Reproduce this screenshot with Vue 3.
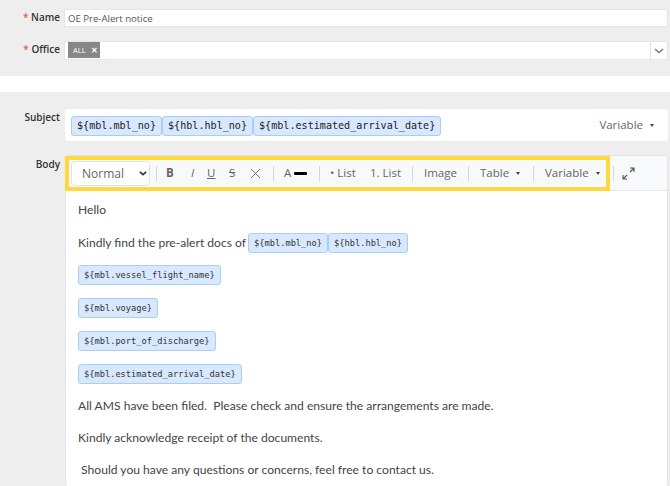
<script setup>
const vars = ['${mbl.vessel_flight_name}', '${mbl.voyage}', '${mbl.port_of_discharge}', '${mbl.estimated_arrival_date}']
</script>

<template>
  <div class="page">
    <section class="panel top">
      <div class="row name-row">
        <label class="label"><span class="req">*</span> Name</label>
        <div class="input name-input">OE Pre-Alert notice</div>
      </div>
      <div class="row office-row">
        <label class="label"><span class="req">*</span> Office</label>
        <div class="input office-input">
          <span class="tag">ALL <b>✕</b></span>
          <span class="select-arrow">
            <svg width="10" height="6" viewBox="0 0 10 6"><path d="M1 1l4 3.500L9 1" fill="none" stroke="#777" stroke-width="1.4"/></svg>
          </span>
        </div>
      </div>
    </section>

    <section class="panel bottom">
      <div class="row subject-row">
        <label class="label">Subject</label>
        <div class="subject">
          <span class="chip">${mbl.mbl_no}</span><span class="chip">${hbl.hbl_no}</span><span class="chip">${mbl.estimated_arrival_date}</span>
          <span class="variable">Variable <i class="caret"></i></span>
        </div>
      </div>
      <div class="row body-row">
        <label class="label">Body</label>
        <div class="editor">
          <div class="toolbar">
            <div class="highlight"></div>
            <div class="format">Normal
              <svg width="8" height="5" viewBox="0 0 8 5"><path d="M.8 .8l3.200 2.900L7.200 .8" fill="none" stroke="#333" stroke-width="1.6"/></svg>
            </div>
            <i class="sep s1"></i>
            <span class="tool b">B</span>
            <span class="tool it">I</span>
            <span class="tool u">U</span>
            <span class="tool st">S</span>
            <svg class="clear" width="11" height="11" viewBox="0 0 11 11"><path d="M1 1l9 9M10 1l-9 9" stroke="#777" stroke-width="1" fill="none"/></svg>
            <i class="sep s2"></i>
            <span class="tool color">A<i class="swatch"></i></span>
            <i class="sep s3"></i>
            <span class="tool bl">• List</span>
            <span class="tool ol">1. List</span>
            <i class="sep s4"></i>
            <span class="tool img">Image</span>
            <i class="sep s5"></i>
            <span class="tool tbl">Table <i class="caret"></i></span>
            <i class="sep s6"></i>
            <span class="tool var">Variable <i class="caret"></i></span>
            <i class="sep s7"></i>
            <svg class="expand" width="13" height="13" viewBox="0 0 13 13"><path d="M8 1h4v4M12 1L8 5M5 12H1V8M1 12l4-4" fill="none" stroke="#555" stroke-width="1.1"/></svg>
          </div>
          <div class="content">
            <p class="t-hello">Hello</p>
            <p class="t-line">Kindly find the pre-alert docs of<span class="chip small first">${mbl.mbl_no}</span><span class="chip small">${hbl.hbl_no}</span></p>
            <p v-for="v in vars" :key="v" class="t-var"><span class="chip small">{{ v }}</span></p>
            <p class="t-text">All AMS have been filed.&nbsp; Please check and ensure the arrangements are made.</p>
            <p class="t-text">Kindly acknowledge receipt of the documents.</p>
            <p class="t-text">&nbsp;Should you have any questions or concerns, feel free to contact us.</p>
          </div>
        </div>
      </div>
    </section>
  </div>
</template>

<style>
html, body { margin: 0; background: #fff; overflow: hidden; }
</style>

<style scoped>
.page { width: 670px; height: 486px; overflow: hidden; font-family: "Open Sans", sans-serif; color: #333; }
.panel { background: #eeeeee; box-sizing: border-box; }
.top { height: 76px; padding-top: 9px; }
.bottom { margin-top: 16px; height: 394px; padding-top: 17px; }
.row { display: flex; align-items: flex-start; }
.label { width: 60px; margin-right: 4px; padding-top: 1px; text-align: right; font-size: 10px; font-weight: 600; color: #333; line-height: 15px; flex: none; }
.req { color: #e4574c; }
.input { background: #fff; box-sizing: border-box; width: 604px; border: 1px solid #e6e6e6; }
.name-input { height: 18px; line-height: 17px; padding-left: 3px; font-size: 9.6px; color: #555; }
.office-row { margin-top: 14px; }
.office-input { height: 19px; position: relative; padding: 0 0 0 3px; display: flex; }
.tag { display: inline-flex; align-items: center; height: 16px; width: 32px; box-sizing: border-box; padding-left: 5px; background: #878787; color: #fff; font-size: 7.5px; }
.tag b { margin-left: 5px; font-size: 7.5px; }
.select-arrow { margin-left: auto; width: 16px; height: 17px; border-left: 1px solid #e2e2e2; display: flex; align-items: center; justify-content: center; }
.subject { width: 603px; height: 32px; margin-left: 1px; background: #fff; border-radius: 3px; display: flex; align-items: center; padding: 1px 0 0 6px; box-sizing: border-box; }
.chip { display: inline-block; box-sizing: border-box; font-family: "DejaVu Sans Mono", monospace; background: #d7e8ff; border: 1px solid #a9cdf6; border-radius: 3px; color: #222; font-size: 10.1px; line-height: 18px; height: 20px; padding: 0 5px; }
.variable { margin-left: auto; margin-right: 14px; margin-top: -3px; font-size: 11.5px; color: #666; }
.caret { display: inline-block; width: 0; height: 0; border-left: 2px solid transparent; border-right: 2px solid transparent; border-top: 3px solid #444; margin-left: 4px; vertical-align: 2px; }
.body-row { margin-top: 14px; }
.body-row .label { padding-top: 2px; }
.editor { width: 603px; margin-left: 1px; background: #fff; border-radius: 3px; border: 1px solid #e4e4e4; border-bottom: 0; box-sizing: border-box; height: 331px; }
.toolbar { position: relative; height: 35px; background: #f8f9fb; border-bottom: 1px solid #e6e6e6; box-sizing: border-box; }
.highlight { position: absolute; left: -1px; top: 0; width: 545px; height: 35px; border: 4px solid #ffd83f; box-sizing: border-box; pointer-events: none; z-index: 2; }
.format { position: absolute; left: 5px; top: 5px; width: 79px; height: 25px; background: #fff; border: 1px solid #e2e2e2; border-radius: 4px; box-sizing: border-box; font-size: 12px; color: #666; line-height: 23px; padding-left: 10px; }
.format svg { position: absolute; right: 2px; top: 9px; }
.sep { position: absolute; top: 10px; height: 15px; width: 1px; background: #d4d6d8; }
.s1 { left: 90px; } .s2 { left: 207px; } .s3 { left: 253px; } .s4 { left: 346px; } .s5 { left: 402px; } .s6 { left: 467px; } .s7 { left: 547px; z-index: 3; }
.tool { position: absolute; top: 9px; font-size: 11.5px; line-height: 16px; color: #666; white-space: nowrap; }
.b { left: 100px; font-weight: 700; }
.it { left: 125px; font-style: italic; }
.u { left: 141px; text-decoration: underline; }
.st { left: 163px; text-decoration: line-through; }
.clear { position: absolute; left: 184px; top: 12px; }
.color { left: 218px; display: flex; align-items: center; }
.swatch { display: block; width: 13px; height: 3px; border-radius: 1px; background: #000; margin-left: 3px; }
.bl { left: 264px; } .ol { left: 304px; } .img { left: 358px; } .tbl { left: 414px; } .var { left: 479px; }
.expand { position: absolute; left: 556px; top: 11px; }
.content { padding: 11px 0 0 12px; font-family: Lato, sans-serif; font-size: 12.1px; color: #444; }
.content p { margin: 0; }
.t-hello { line-height: 15px; }
.t-line { margin-top: 16px !important; height: 20px; line-height: 20px; display: flex; align-items: center; white-space: pre; }
.t-line .first { margin-left: 2px; }
.chip.small { font-size: 8.7px; height: 20px; line-height: 18px; color: #333; }
.t-var { margin-top: 12px !important; height: 20px; display: flex; }
.t-var + .t-var { margin-top: 13px !important; }
.t-text { margin-top: 17px !important; line-height: 15px; white-space: pre; }
.t-var + .t-text { margin-top: 14px !important; }
</style>
